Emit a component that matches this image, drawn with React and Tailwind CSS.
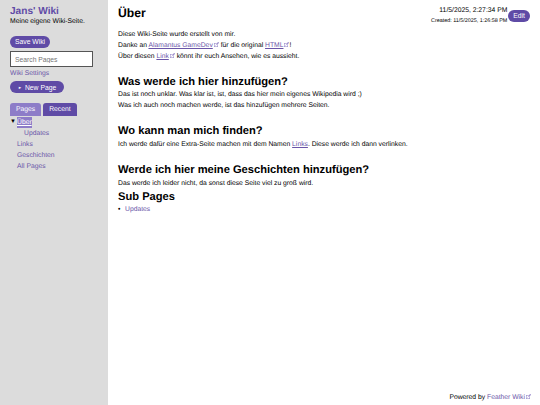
import React from 'react';

// small "opens elsewhere" mark after external links
const Ext = () => (
  <svg viewBox="0 0 10 10" className="inline-block w-[5px] h-[5px] ml-[1px] align-baseline" fill="none" stroke="#8f7fc4" strokeWidth="1">
    <rect x="0.5" y="2.5" width="7" height="7" />
    <path d="M3 7 L9.5 0.5 M6 0.5 H9.5 V4" />
  </svg>
);

const A = ({ children, ext }) => (
  <>
    <a className="text-[#6a55a8] underline">{children}</a>
    {ext && <Ext />}
  </>
);

const App = () => {
  return (
    <div className="flex h-[405px] w-[540px] overflow-hidden bg-white text-[6.77px] leading-[11px] text-black [text-rendering:geometricPrecision] font-['Liberation_Sans',Arial,sans-serif]">
      {/* Sidebar */}
      <aside className="w-[108px] shrink-0 bg-[#dcdcdc] pl-[10px] pr-[15px] pt-[6px]">
        <div className="text-[10.1px] leading-[12px] font-bold text-[#5f4ba6]">Jans' Wiki</div>
        <div className="leading-[8px]">Meine eigene Wiki-Seite.</div>
        <button className="mt-[10px] block h-[12px] rounded-full bg-[#5f4ba6] px-[5px] leading-[12px] text-white">Save Wiki</button>
        <input
          className="mt-[3px] block h-[16px] w-[83px] border border-[#555] bg-white px-[4px] text-[6.77px] placeholder:text-[#757575]"
          placeholder="Search Pages"
        />
        <div className="mt-[1px] text-[#6a55a8]">Wiki Settings</div>
        <button className="mt-[2px] flex h-[12px] items-center gap-[3px] rounded-full bg-[#5f4ba6] px-[8px] text-white">
          <span className="text-[4px]">►</span>New Page
        </button>

        <div className="mt-[10px] flex gap-[2px]">
          <div className="h-[13px] rounded-t-[3px] bg-[#8d7cc8] px-[6px] leading-[13px] text-white">Pages</div>
          <div className="h-[13px] rounded-t-[3px] bg-[#5f4ba6] px-[6px] leading-[13px] text-white">Recent</div>
        </div>
        <ul className="mt-[1px] text-[#6a55a8]">
          <li className="flex items-center">
            <span className="w-[7px] text-[6px] text-black">▼</span>
            <span className="bg-[#8d7cc8] text-white underline">Über</span>
          </li>
          <li className="pl-[14px]">Updates</li>
          <li className="pl-[7px]">Links</li>
          <li className="pl-[7px]">Geschichten</li>
          <li className="pl-[7px]">All Pages</li>
        </ul>
      </aside>

      {/* Content */}
      <main className="flex min-w-0 flex-1 flex-col pl-[10px] pr-[9px] pt-[6px]">
        <header className="flex items-start justify-between">
          <h1 className="text-[12.2px] leading-[15px] font-bold">Über</h1>
          <div className="flex items-center gap-[1px] pr-[1px]">
            <div className="text-right">
              <div className="leading-[9px]">11/5/2025, 2:27:34 PM</div>
              <div className="mt-[2px] text-[5.4px] leading-[8px]">Created: 11/5/2025, 1:26:58 PM</div>
            </div>
            <button className="h-[12px] rounded-full bg-[#5f4ba6] px-[5px] leading-[12px] text-white">Edit</button>
          </div>
        </header>

        <article className="mt-[4px]">
          <p>Diese Wiki-Seite wurde erstellt von mir.</p>
          <p>Danke an <A ext>Alamantus GameDev</A> für die original <A ext>HTML</A>!</p>
          <p>Über diesen <A ext>Link</A> könnt ihr euch Ansehen, wie es aussieht.</p>

          <h2 className="mt-[12.5px] text-[11.15px] leading-[14px] font-bold">Was werde ich hier hinzufügen?</h2>
          <p>Das ist noch unklar. Was klar ist, ist, dass das hier mein eigenes Wikipedia wird ;)</p>
          <p>Was ich auch noch machen werde, ist das hinzufügen mehrere Seiten.</p>

          <h2 className="mt-[13.5px] text-[11.15px] leading-[14px] font-bold">Wo kann man mich finden?</h2>
          <p className="mt-[0.5px]">Ich werde dafür eine Extra-Seite machen mit dem Namen <A>Links</A>. Diese werde ich dann verlinken.</p>

          <h2 className="mt-[13.5px] text-[11.15px] leading-[14px] font-bold">Werde ich hier meine Geschichten hinzufügen?</h2>
          <p className="mt-[0.5px]">Das werde ich leider nicht, da sonst diese Seite viel zu groß wird.</p>

          <h2 className="mt-[1.5px] text-[11.15px] leading-[14px] font-bold">Sub Pages</h2>
          <ul>
            <li className="flex text-[#6a55a8]">
              <span className="w-[7px] text-black">•</span>Updates
            </li>
          </ul>
        </article>

        <footer className="mt-auto pb-[2px] text-right">
          Powered by <span className="text-[#6a55a8]">Feather Wiki</span><Ext />
        </footer>
      </main>
    </div>
  );
};

export default App;
